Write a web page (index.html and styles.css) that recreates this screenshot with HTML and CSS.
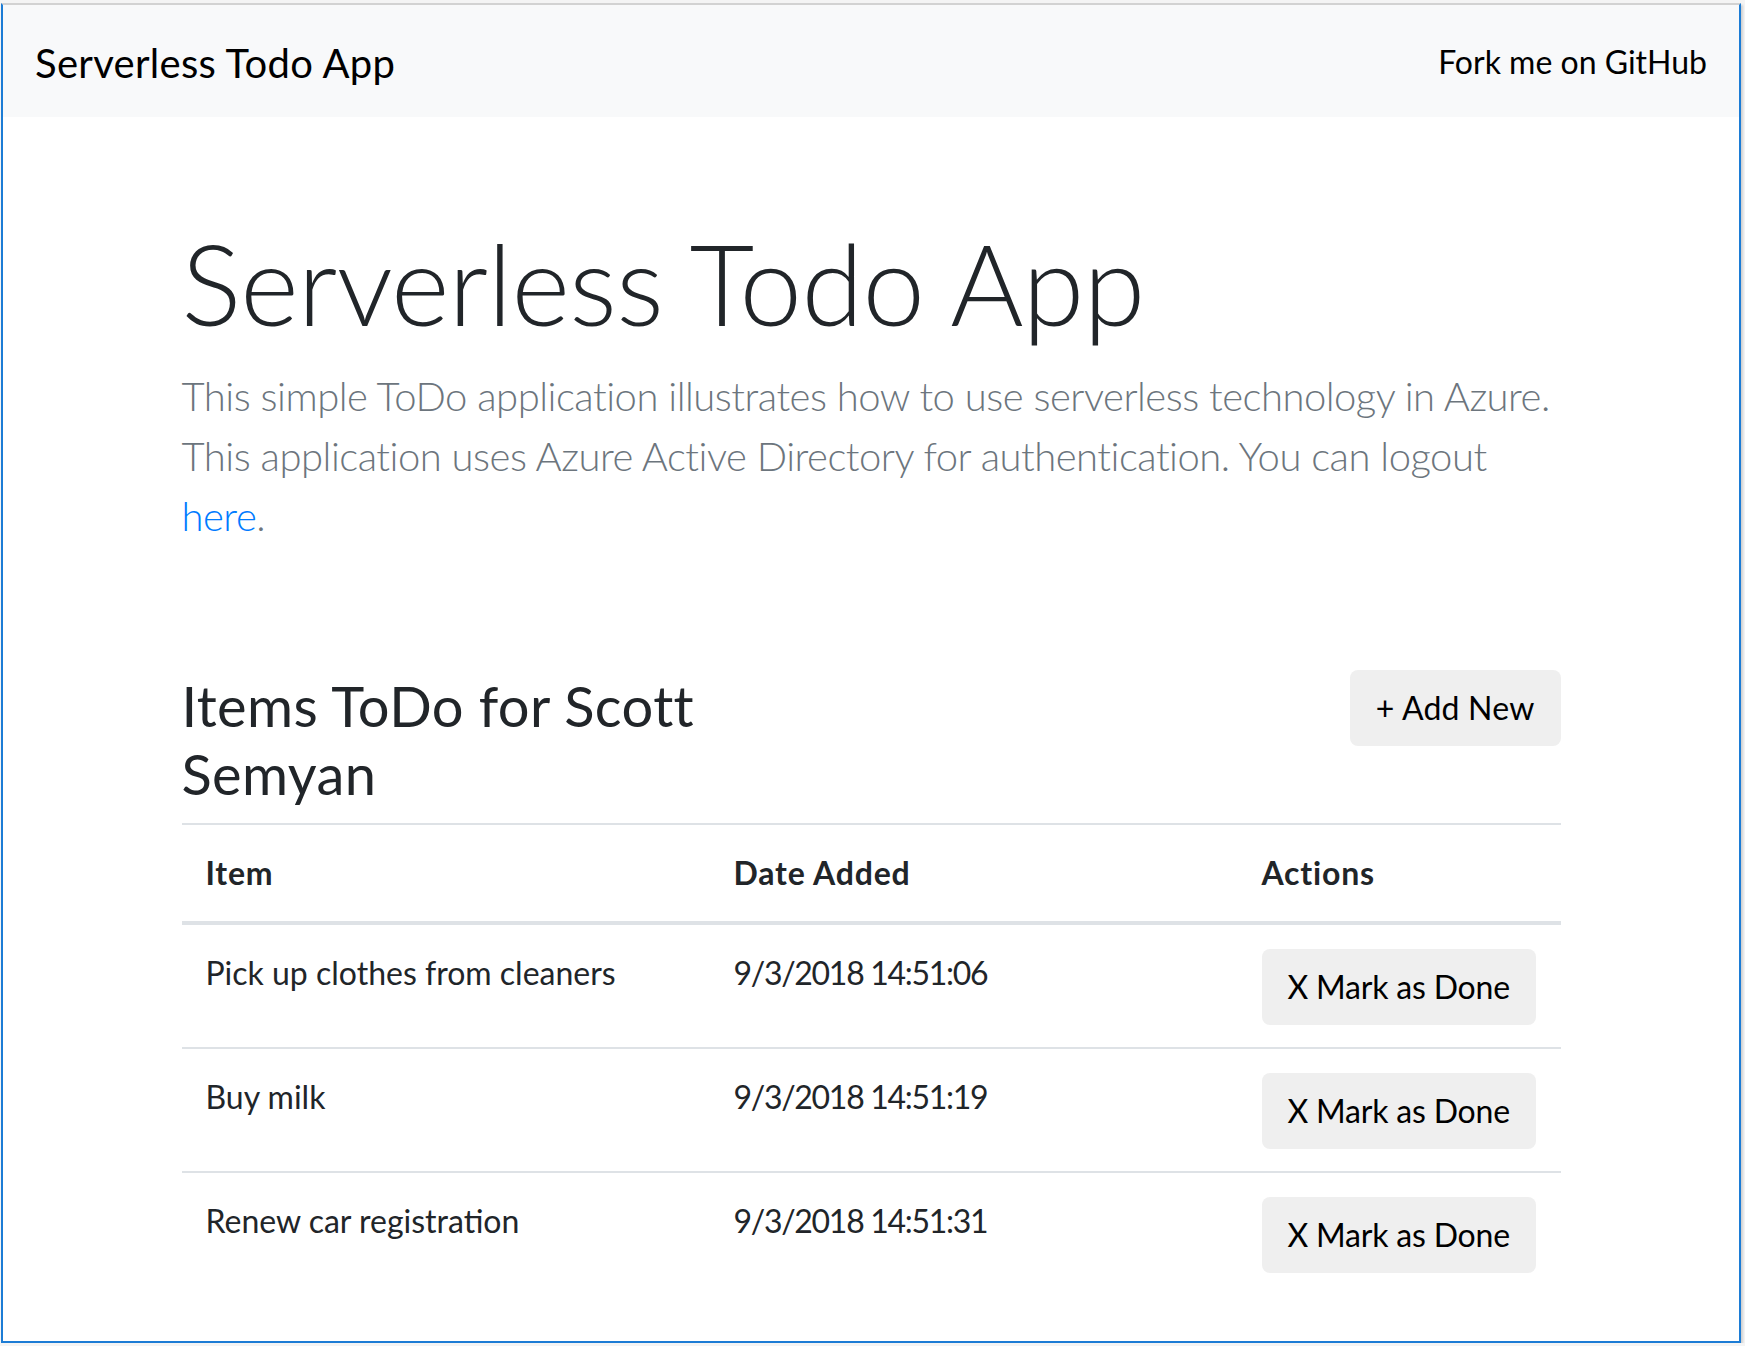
FILE: index.html
```html
<!DOCTYPE html>
<html lang="en">
<head>
<meta charset="utf-8">
<title>Serverless Todo App</title>
<link rel="stylesheet" href="styles.css">
</head>
<body>
<div class="window">
  <nav class="navbar">
    <a class="brand" href="#">Serverless Todo App</a>
    <a class="nav-link" href="#">Fork me on GitHub</a>
  </nav>
  <main class="container">
    <section class="jumbo">
      <h1 class="display">Serverless Todo App</h1>
      <p class="lead">This simple ToDo application illustrates how to use serverless technology in Azure.<br>This application uses Azure Active Directory for authentication. You can logout <a href="#">here</a>.</p>
    </section>
    <div class="list-head">
      <h3 class="list-title">Items ToDo for Scott Semyan</h3>
      <button class="btn" type="button">+ Add New</button>
    </div>
    <table class="table">
      <thead>
        <tr>
          <th class="col-item">Item</th>
          <th class="col-date">Date Added</th>
          <th class="col-actions">Actions</th>
        </tr>
      </thead>
      <tbody>
        <tr>
          <td>Pick up clothes from cleaners</td>
          <td class="date">9/3/2018 14:51:06</td>
          <td><button class="btn btn-done" type="button">X Mark as Done</button></td>
        </tr>
        <tr>
          <td>Buy milk</td>
          <td class="date">9/3/2018 14:51:19</td>
          <td><button class="btn btn-done" type="button">X Mark as Done</button></td>
        </tr>
        <tr>
          <td>Renew car registration</td>
          <td class="date">9/3/2018 14:51:31</td>
          <td><button class="btn btn-done" type="button">X Mark as Done</button></td>
        </tr>
      </tbody>
    </table>
  </main>
</div>
</body>
</html>
```
FILE: styles.css
```css
* { box-sizing: border-box; }

html, body {
  margin: 0;
  padding: 0;
  background: #f4f4f4;
}

body {
  padding: 3px 0 0 1px;
  font-family: "Segoe UI", Lato, "Open Sans", sans-serif;
  color: #212529;
  font-size: 32px;
  line-height: 1.5;
}

.window {
  width: 1740px;
  height: 1340px;
  background: #fff;
  border-top: 2px solid #d2d2d2;
  border-left: 2px solid #1c7cd5;
  border-right: 2px solid #1c7cd5;
  border-bottom: 2px solid #1c7cd5;
  box-shadow: 2px 2px 2px rgba(0, 0, 0, 0.15);
  overflow: hidden;
}

.navbar {
  display: flex;
  justify-content: space-between;
  align-items: center;
  height: 112px;
  padding: 16px 32px;
  background: #f8f9fa;
}

.brand {
  font-size: 40px;
  line-height: 60px;
  padding: 12px 0 8px;
  letter-spacing: 0.3px;
  color: #000;
  text-decoration: none;
}

.nav-link {
  font-size: 32px;
  line-height: 48px;
  padding: 17px 0 15px;
  color: #000;
  text-decoration: none;
}

.container {
  width: 1379px;
  margin: 0 auto;
}

.jumbo {
  padding: 99px 0 124px;
}

.display {
  margin: 0 0 16px;
  font-size: 112px;
  font-weight: 300;
  line-height: 1.2;
  letter-spacing: -0.7px;
}

.lead {
  margin: 0;
  font-size: 40px;
  font-weight: 300;
  line-height: 60px;
  letter-spacing: -0.5px;
  color: #6c757d;
}

.lead a {
  color: #007bff;
  text-decoration: none;
}

.list-head {
  display: flex;
  justify-content: space-between;
  align-items: flex-start;
}

.list-title {
  width: 660px;
  margin: 2px 0 16px;
  font-size: 56px;
  font-weight: 400;
  line-height: 1.2;
  letter-spacing: 0.4px;
}

.btn {
  display: inline-block;
  vertical-align: top;
  font-family: inherit;
  font-size: 32px;
  line-height: 48px;
  padding: 12px 24px;
  border: 2px solid transparent;
  border-radius: 8px;
  background: #efefef;
  color: #000;
  white-space: nowrap;
  letter-spacing: 0.2px;
}

.btn-done {
  letter-spacing: -0.2px;
}

.table {
  width: 100%;
  border-collapse: collapse;
}

.table th,
.table td {
  padding: 24px;
  text-align: left;
  vertical-align: top;
  border-top: 2px solid #dee2e6;
}

.table td {
  padding-bottom: 22px;
}

.table th {
  font-weight: 700;
  letter-spacing: 0.8px;
}

.table thead th {
  border-bottom: 4px solid #dee2e6;
}

.table .date {
  letter-spacing: -1.3px;
}

.col-item { width: 528px; }
.col-date { width: 528px; }
```
